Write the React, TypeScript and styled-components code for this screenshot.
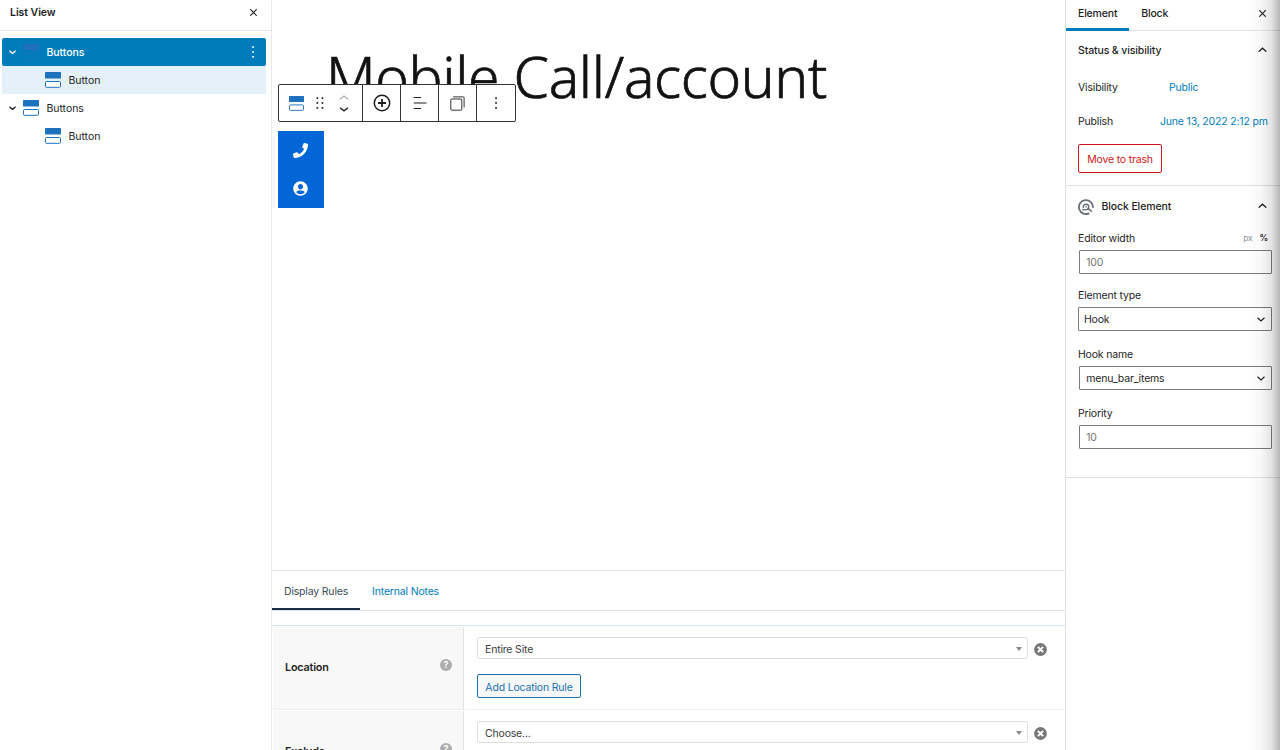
import React from 'react';
import styled, { createGlobalStyle } from 'styled-components';

const GlobalStyle = createGlobalStyle`
  * {
    box-sizing: border-box;
  }
  body {
    margin: 0;
    background: #fff;
    color: #1e1e1e;
    font-family: Inter, sans-serif;
    font-size: 10.5px;
    line-height: 15px;
    letter-spacing: -0.18px;
    overflow: hidden;
  }
  button {
    font: inherit;
    letter-spacing: inherit;
    color: inherit;
    background: none;
    border: 0;
    padding: 0;
    white-space: nowrap;
  }
  svg {
    display: block;
    flex: none;
  }
`;

const Editor = styled.div`
  display: grid;
  grid-template-columns: 272px 793px 215px;
  width: 1280px;
  height: 750px;
  overflow: hidden;
`;

/* List view */

const ListPanel = styled.aside`
  border-right: 1px solid #e8e8e8;
  letter-spacing: -0.05px;
`;

const ListHeader = styled.header`
  display: flex;
  align-items: center;
  justify-content: space-between;
  height: 31px;
  padding: 0 14px 5px 10px;
  border-bottom: 1px solid #e8e8e8;
  font-weight: 600;
`;

const Tree = styled.div`
  padding: 7px 5px 0 2px;
`;

const TreeRow = styled.div<{ $level: number; $state?: 'selected' | 'child' }>`
  display: flex;
  align-items: center;
  height: 28px;
  padding-left: ${(p) => (p.$level === 0 ? 7 : 43)}px;
  padding-right: 11px;
  border-radius: ${(p) => (p.$state === 'selected' ? '2px' : '0')};
  background: ${(p) => (p.$state === 'selected' ? '#007cba' : p.$state === 'child' ? '#e5f1f8' : 'transparent')};
  color: ${(p) => (p.$state === 'selected' ? '#fff' : '#1e1e1e')};
  font-weight: ${(p) => (p.$state === 'selected' ? 500 : 400)};
`;

const TreeIcon = styled.span<{ $level: number }>`
  margin-left: ${(p) => (p.$level === 0 ? 7 : 0)}px;
  margin-right: 7.5px;
`;

const TreeLabel = styled.span`
  flex: 1;
  padding-top: 1px;
`;

/* Canvas */

const Main = styled.main`
  display: flex;
  flex-direction: column;
  min-width: 0;
  height: 750px;
  overflow: hidden;
`;

const Canvas = styled.section`
  position: relative;
  flex: none;
  height: 570px;
  padding: 36px 0 0 6px;
`;

const Title = styled.h1`
  margin: 0 0 15px 48px;
  height: 80px;
  color: #121212;
  font-family: 'Noto Sans', sans-serif;
  font-size: 57px;
  font-weight: 300;
  line-height: 80px;
  letter-spacing: -0.4px;
  -webkit-text-stroke: 0.7px #121212;
  white-space: nowrap;
`;

const Toolbar = styled.div`
  position: absolute;
  top: 84px;
  left: 6px;
  display: flex;
  height: 38px;
  border: 1px solid #333;
  border-radius: 2px;
  background: #fff;
`;

const ToolGroup = styled.div<{ $width: number }>`
  display: flex;
  align-items: center;
  justify-content: center;
  width: ${(p) => p.$width}px;

  & + & {
    border-left: 1px solid #333;
  }
`;

const BlockTools = styled(ToolGroup)`
  justify-content: flex-start;
  padding-left: 10px;

  svg:nth-child(2) {
    margin: 0 15px 0 12px;
  }
`;

const CallButtons = styled.div`
  display: flex;
  flex-direction: column;
  width: 46px;
`;

const CallButton = styled.button`
  display: flex;
  align-items: center;
  justify-content: center;
  height: 38.5px;
  padding-right: 1px;
  background: #0366d6;
`;

/* Settings below the canvas */

const MetaTabs = styled.nav`
  display: flex;
  flex: none;
  height: 41px;
  border-top: 1px solid #e2eaf1;
  border-bottom: 1px solid #dbe5ee;
`;

const MetaTab = styled.button<{ $active?: boolean }>`
  padding: 3px 12px 0;
  height: 39px;
  color: ${(p) => (p.$active ? '#3c4b5d' : '#007cba')};
  border-bottom: 2px solid ${(p) => (p.$active ? '#1b2b42' : 'transparent')};
`;

const Rules = styled.div`
  display: grid;
  grid-template-columns: 191px 1fr;
  grid-auto-rows: 83px;
  gap: 1px;
  margin-top: 14px;
  padding: 1px 1px 0 1px;
  border-top: 1px solid #d7e3ea;
`;

const RuleName = styled.div`
  display: flex;
  align-items: center;
  justify-content: space-between;
  padding: 0 11px 2px 12px;
  background: #f8f8f8;
  border-right: 1px solid #e3e3e3;
  border-bottom: 1px solid #f0f0f0;
  font-size: 10.8px;
  font-weight: 600;
`;

const RuleFields = styled.div`
  padding: 10px 0 0 12px;
  border-bottom: 1px solid #f0f0f0;
`;

const RuleSelectRow = styled.div`
  display: flex;
  align-items: center;
  gap: 6px;

  > svg {
    margin-top: 3px;
  }
`;

const RuleSelect = styled.div`
  display: flex;
  align-items: center;
  justify-content: space-between;
  width: 551px;
  height: 22px;
  padding: 2px 5px 0 7px;
  border: 1px solid #dedede;
  border-radius: 3px;
  color: #3c3c3c;

  svg {
    margin-bottom: 1px;
  }
`;

const AddRule = styled.button`
  width: 104px;
  height: 24px;
  margin-top: 15px;
  padding-top: 2px;
  border: 1px solid #2271b1;
  border-radius: 2px;
  background: #f6f7f7;
  color: #2271b1;
`;

/* Sidebar */

const Sidebar = styled.aside`
  position: relative;
  border-left: 1px solid #e0e0e0;
`;

const EdgeShadow = styled.div`
  position: absolute;
  top: 0;
  right: 0;
  width: 34px;
  height: 750px;
  background: linear-gradient(to right, rgba(0, 0, 0, 0), rgba(0, 0, 0, 0.03) 45%, rgba(0, 0, 0, 0.11) 75%, rgba(0, 0, 0, 0.29));
  pointer-events: none;
`;

const SideTabs = styled.nav`
  display: flex;
  align-items: center;
  height: 31px;
  padding-right: 14.5px;
  border-bottom: 1px solid #e4e4e4;
`;

const SideTab = styled.button<{ $active?: boolean }>`
  height: 31px;
  padding: 0 12px ${(p) => (p.$active ? 0 : 3)}px;
  border-bottom: ${(p) => (p.$active ? '3px solid #007cba' : '0')};
  font-weight: 500;
`;

const TabClose = styled.button`
  margin-left: auto;
  padding-bottom: 4px;
`;

const Section = styled.section<{ $height: number }>`
  height: ${(p) => p.$height}px;
  padding: 0 8px 0 12px;
  border-bottom: 1px solid #e0e0e0;
`;

const SectionHead = styled.div<{ $height: number }>`
  display: flex;
  align-items: center;
  gap: 7.5px;
  height: ${(p) => p.$height}px;
  padding-right: 5.5px;
  font-weight: 500;
  letter-spacing: -0.12px;

  svg:last-child {
    margin-left: auto;
    margin-bottom: 2px;
  }
`;

const InfoRow = styled.div`
  display: flex;
  align-items: center;
  height: 34px;
  padding-top: 1px;
`;

const InfoLabel = styled.span<{ $width: number }>`
  width: ${(p) => p.$width}px;
`;

const Link = styled.a`
  color: #007cba;
  white-space: nowrap;
`;

const TrashButton = styled.button`
  display: block;
  width: 84px;
  height: 29px;
  margin-top: 6px;
  padding-top: 1px;
  border: 1px solid #cc1818;
  border-radius: 2px;
  color: #cc1818;
`;

const Fields = styled.div`
  padding-top: 4px;
`;

const Field = styled.div`
  & + & {
    margin-top: 16px;
  }

  &:nth-child(2) {
    margin-top: 14px;
  }
`;

const FieldLabel = styled.div`
  display: flex;
  justify-content: space-between;
  margin-bottom: 4px;
`;

const Units = styled.span`
  display: flex;
  gap: 7px;
  padding-right: 4px;
  color: #8a94a0;
  font-size: 8.6px;

  b {
    color: #1e1e1e;
    font-weight: 600;
  }
`;

const Control = styled.div<{ $placeholder?: boolean; $flush?: boolean }>`
  display: flex;
  align-items: center;
  justify-content: space-between;
  width: ${(p) => (p.$flush ? 194 : 193.6)}px;
  height: 24px;
  margin-left: ${(p) => (p.$flush ? 0 : 0.6)}px;
  padding: 1px 6px 0 ${(p) => (p.$flush ? 5 : 6.6)}px;
  border: 1px solid #7b7b7b;
  border-radius: 1px;
  color: ${(p) => (p.$placeholder ? '#757575' : '#1e1e1e')};
`;

type ChevronProps = {
  up?: boolean;
  size?: number;
  color?: string;
  stroke?: number;
};

const Chevron: React.FC<ChevronProps> = ({ up, size = 8, color = 'currentColor', stroke = 1.2 }) => (
  <svg width={size} height={size / 2 + 1} viewBox="0 0 8 5" fill="none" stroke={color} strokeWidth={stroke}>
    <path d={up ? 'M0.5 4.2 4 1.1 7.5 4.2' : 'M0.5 0.8 4 3.9 7.5 0.8'} />
  </svg>
);

const Close = () => (
  <svg width="7" height="7" viewBox="0 0 7 7" stroke="#1e1e1e" strokeWidth="1.15">
    <path d="M0.3 0.3 6.7 6.7M6.7 0.3 0.3 6.7" />
  </svg>
);

const ButtonsIcon = ({ size = 16, muted = false }: { size?: number; muted?: boolean }) => (
  <svg width={size} height={size} viewBox="0 0 16 16">
    <rect x="0" y="0" width="16" height="6.5" rx="0.6" fill="#1e72bd" />
    <rect
      x="0.5"
      y="9.5"
      width="15"
      height="5.8"
      rx="1"
      fill={muted ? 'none' : '#fff'}
      stroke={muted ? '#1478bd' : '#1e72bd'}
    />
  </svg>
);

const Dots = ({ color = '#1e1e1e' }: { color?: string }) => (
  <svg width="4" height="12" viewBox="0 0 4 12" fill={color}>
    <rect x="1.2" y="0.2" width="1.7" height="1.7" />
    <rect x="1.2" y="5.1" width="1.7" height="1.7" />
    <rect x="1.2" y="10" width="1.7" height="1.7" />
  </svg>
);

const DragHandle = () => (
  <svg width="8" height="12" viewBox="0 0 8 12" fill="#1e1e1e">
    {[0.2, 5.1, 10].map((y) => (
      <React.Fragment key={y}>
        <rect x="0.5" y={y} width="1.7" height="1.7" />
        <rect x="5.6" y={y} width="1.7" height="1.7" />
      </React.Fragment>
    ))}
  </svg>
);

const Movers = () => (
  <svg width="10" height="17" viewBox="0 0 10 17" fill="none" strokeWidth="1.2">
    <path d="M1 4.2 5 1 9 4.2" stroke="#a8a8a8" />
    <path d="M1 12.7 5 15.9 9 12.7" stroke="#1e1e1e" strokeWidth="1.4" />
  </svg>
);

const AddIcon = () => (
  <svg width="18" height="18" viewBox="0 0 18 18" fill="none" stroke="#1e1e1e">
    <circle cx="9" cy="9" r="7.7" strokeWidth="1.5" />
    <path d="M9 5v8M5 9h8" strokeWidth="1.8" />
  </svg>
);

const AlignIcon = () => (
  <svg width="14" height="14" viewBox="0 0 14 14" fill="none" stroke="#1e1e1e" strokeWidth="1.2">
    <path d="M0.8 1.5H8M0.8 7H13.5M0.8 12.5H8" />
  </svg>
);

const GroupIcon = () => (
  <svg width="15" height="15" viewBox="0 0 15 15" fill="none" stroke="#333" strokeWidth="1">
    <rect x="0.8" y="3" width="11" height="11.2" rx="0.8" />
    <path d="M3.2 0.9H13.4Q14.1 0.9 14.1 1.6V11.5" />
  </svg>
);

const PhoneIcon = () => (
  <svg width="15" height="15" viewBox="0 0 512 512" fill="#fff">
    <path d="M493.4 24.6l-104-24c-11.3-2.6-22.9 3.3-27.5 13.9l-48 112c-4.2 9.8-1.4 21.3 6.9 28l60.6 49.6c-36 76.7-98.9 140.5-177.2 177.2l-49.6-60.6c-6.8-8.3-18.2-11.1-28-6.9l-112 48C3.9 366.5-2 378.1.6 389.4l24 104C27.1 504.2 36.7 512 48 512c256.1 0 464-207.5 464-464 0-11.2-7.7-20.9-18.6-23.4z" />
  </svg>
);

const UserIcon = () => (
  <svg width="15" height="15" viewBox="0 0 496 512" fill="#fff">
    <path d="M248 8C111 8 0 119 0 256s111 248 248 248 248-111 248-248S385 8 248 8zm0 96c48.6 0 88 39.4 88 88s-39.4 88-88 88-88-39.4-88-88 39.4-88 88-88zm0 344c-58.7 0-111.3-26.6-146.5-68.2 18.8-35.4 55.6-59.8 98.5-59.8 2.4 0 4.8.4 7.1 1.1 13 4.2 26.6 6.9 40.9 6.9 14.3 0 28-2.7 40.9-6.9 2.3-.7 4.7-1.1 7.1-1.1 42.9 0 79.7 24.4 98.5 59.8C359.3 421.4 306.7 448 248 448z" />
  </svg>
);

const HelpIcon = styled.span`
  display: flex;
  align-items: center;
  justify-content: center;
  width: 12px;
  height: 12px;
  margin-top: -4px;
  border-radius: 50%;
  background: #adadad;
  color: #fff;
  font-size: 9px;
  font-weight: 700;
  line-height: 12px;
`;

const RemoveIcon = () => (
  <svg width="13" height="13" viewBox="0 0 13 13">
    <circle cx="6.5" cy="6.5" r="6.4" fill="#787878" />
    <path d="M3.9 3.9 9.1 9.1M9.1 3.9 3.9 9.1" stroke="#fff" strokeWidth="2" />
  </svg>
);

const Caret = () => (
  <svg width="6" height="4" viewBox="0 0 6 4">
    <path d="M0 0H6L3 4Z" fill="#888" />
  </svg>
);

const ElementLogo = () => (
  <svg width="16" height="16" viewBox="0 0 16 16" fill="none" stroke="#6c7075">
    <path d="M11.4 14.2A7 7 0 1 1 14.9 8.8" strokeWidth="1.8" />
    <path d="M4.2 10.8 9.2 10.4C11.6 9.4 11.2 5.2 8.2 5.2 6 5.2 5 7 5.4 9M10.2 9.4 13.8 12.6" strokeWidth="1.5" />
    <path d="M7.5 7.9H9" strokeWidth="1.2" />
  </svg>
);

const tree = [
  { label: 'Buttons', level: 0, state: 'selected' as const },
  { label: 'Button', level: 1, state: 'child' as const },
  { label: 'Buttons', level: 0 },
  { label: 'Button', level: 1 },
];

const App: React.FC = () => {
  return (
    <>
      <GlobalStyle />
      <Editor>
        <ListPanel>
          <ListHeader>
            List View
            <button>
              <Close />
            </button>
          </ListHeader>
          <Tree>
            {tree.map((item, i) => (
              <TreeRow key={i} $level={item.level} $state={item.state}>
                {item.level === 0 && <Chevron size={7} stroke={1.5} />}
                <TreeIcon $level={item.level}>
                  <ButtonsIcon muted={item.state === 'selected'} />
                </TreeIcon>
                <TreeLabel>{item.label}</TreeLabel>
                {item.state === 'selected' && <Dots color="#fff" />}
              </TreeRow>
            ))}
          </Tree>
        </ListPanel>

        <Main>
          <Canvas>
            <Title>Mobile Call/account</Title>
            <Toolbar>
              <BlockTools $width={83}>
                <ButtonsIcon size={15} />
                <DragHandle />
                <Movers />
              </BlockTools>
              <ToolGroup $width={38}>
                <AddIcon />
              </ToolGroup>
              <ToolGroup $width={38}>
                <AlignIcon />
              </ToolGroup>
              <ToolGroup $width={38}>
                <GroupIcon />
              </ToolGroup>
              <ToolGroup $width={39}>
                <Dots />
              </ToolGroup>
            </Toolbar>
            <CallButtons>
              <CallButton>
                <PhoneIcon />
              </CallButton>
              <CallButton>
                <UserIcon />
              </CallButton>
            </CallButtons>
          </Canvas>

          <MetaTabs>
            <MetaTab $active>Display Rules</MetaTab>
            <MetaTab>Internal Notes</MetaTab>
          </MetaTabs>
          <Rules>
            <RuleName>
              Location
              <HelpIcon>?</HelpIcon>
            </RuleName>
            <RuleFields>
              <RuleSelectRow>
                <RuleSelect>
                  Entire Site
                  <Caret />
                </RuleSelect>
                <RemoveIcon />
              </RuleSelectRow>
              <AddRule>Add Location Rule</AddRule>
            </RuleFields>
            <RuleName>
              Exclude
              <HelpIcon>?</HelpIcon>
            </RuleName>
            <RuleFields>
              <RuleSelectRow>
                <RuleSelect>
                  Choose...
                  <Caret />
                </RuleSelect>
                <RemoveIcon />
              </RuleSelectRow>
            </RuleFields>
          </Rules>
        </Main>

        <Sidebar>
          <SideTabs>
            <SideTab $active>Element</SideTab>
            <SideTab>Block</SideTab>
            <TabClose>
              <Close />
            </TabClose>
          </SideTabs>
          <Section $height={155}>
            <SectionHead $height={39}>
              Status &amp; visibility
              <Chevron up size={9} />
            </SectionHead>
            <InfoRow>
              <InfoLabel $width={91}>Visibility</InfoLabel>
              <Link>Public</Link>
            </InfoRow>
            <InfoRow>
              <InfoLabel $width={82}>Publish</InfoLabel>
              <Link>June 13, 2022 2:12 pm</Link>
            </InfoRow>
            <TrashButton>Move to trash</TrashButton>
          </Section>
          <Section $height={292}>
            <SectionHead $height={41}>
              <ElementLogo />
              Block Element
              <Chevron up size={9} />
            </SectionHead>
            <Fields>
              <Field>
                <FieldLabel>
                  Editor width
                  <Units>
                    px <b>%</b>
                  </Units>
                </FieldLabel>
                <Control $placeholder>100</Control>
              </Field>
              <Field>
                <FieldLabel>Element type</FieldLabel>
                <Control $flush>
                  Hook
                  <Chevron />
                </Control>
              </Field>
              <Field>
                <FieldLabel>Hook name</FieldLabel>
                <Control>
                  menu_bar_items
                  <Chevron />
                </Control>
              </Field>
              <Field>
                <FieldLabel>Priority</FieldLabel>
                <Control $placeholder>10</Control>
              </Field>
            </Fields>
          </Section>
          <EdgeShadow />
        </Sidebar>
      </Editor>
    </>
  );
};

export default App;
